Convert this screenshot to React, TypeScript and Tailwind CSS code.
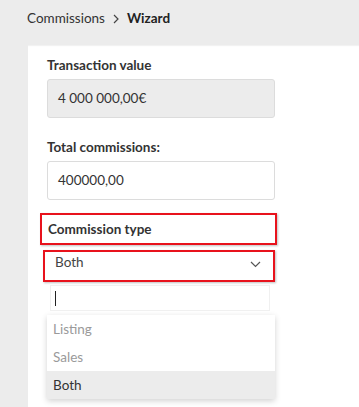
import React from 'react'

const options = ['Listing', 'Sales', 'Both']

function ChevronDown() {
  return (
    <svg width="11" height="7" viewBox="0 0 11 7" fill="none" aria-hidden="true">
      <path d="M1 1l4.5 4.5L10 1" stroke="#555" strokeWidth="1.2" />
    </svg>
  )
}

function ChevronRight() {
  return (
    <svg width="6" height="10" viewBox="0 0 6 10" fill="none" aria-hidden="true">
      <path d="M1 1l4 4-4 4" stroke="#444" strokeWidth="1.2" />
    </svg>
  )
}

export default function App() {
  const selected = 'Both'

  return (
    <div className="flex h-[407px] w-[359px] flex-col overflow-hidden bg-white font-['Lato','Liberation_Sans',sans-serif] text-[#333]">
      {/* Breadcrumb bar */}
      <div className="flex h-[45px] shrink-0 items-start bg-[#ececec] pl-[27px] pt-[8px] shadow-[0_1px_1px_rgba(0,0,0,0.05)]">
        <div className="flex items-center text-[13.5px] leading-[20px]">
          <span className="text-[#333]">Commissions</span>
          <span className="mx-[8px] mt-[1px]">
            <ChevronRight />
          </span>
          <span className="font-bold text-[#222]">Wizard</span>
        </div>
      </div>

      <div className="flex flex-1">
        <div className="w-[28px] shrink-0 bg-[#ececec]" />

        <div className="flex flex-1 flex-col pl-[19px]">
          <span className="mt-[10px] text-[13.5px] font-bold leading-[20px]">Transaction value</span>
          <div className="mt-[4px] flex h-[39px] w-[228px] items-center rounded-[3px] border border-[#dcdcdc] bg-[#ececec] pl-[10px]">
            <span className="text-[13.5px]">4 000 000,00€</span>
          </div>

          <span className="mt-[19px] text-[13.5px] font-bold leading-[20px]">Total commissions:</span>
          <div className="mt-[4px] flex h-[39px] w-[228px] items-center rounded-[3px] border border-[#dcdcdc] bg-white pl-[10px]">
            <span className="text-[13.5px]">400000,00</span>
          </div>

          {/* Commission type */}
          <div className="ml-[-7px] mt-[13px] flex h-[32px] w-[237px] items-center border-2 border-[#e8121c] pl-[6px] shadow-[1px_1px_2px_rgba(0,0,0,0.25)]">
            <span className="text-[13.5px] font-bold leading-[20px]">Commission type</span>
          </div>

          <div className="ml-[-4px] mt-[5px] flex h-[32px] w-[232px] items-center justify-between border-2 border-[#e8121c] pl-[10px] pr-[12px] shadow-[1px_1px_2px_rgba(0,0,0,0.25)]">
            <span className="-mt-[8px] text-[13.5px] text-[#444]">{selected}</span>
            <span className="-mt-[4px]">
              <ChevronDown />
            </span>
          </div>

          <div className="ml-[3px] mt-[3px] flex h-[26px] w-[220px] items-center border border-[#f0f0f0] pl-[4px]">
            <span className="h-[15px] w-[1px] bg-[#222]" />
          </div>

          <ul className="mt-[4px] w-[228px] bg-white shadow-[0_2px_6px_rgba(0,0,0,0.18)]">
            {options.map(opt => (
              <li
                key={opt}
                className={
                  opt === selected
                    ? 'flex h-[28px] items-center bg-[#ececec] pl-[6px] text-[13.5px] text-[#333]'
                    : 'flex h-[28px] items-center pl-[6px] text-[13.5px] text-[#9a9a9a]'
                }
              >
                {opt}
              </li>
            ))}
          </ul>
        </div>
      </div>
    </div>
  )
}
